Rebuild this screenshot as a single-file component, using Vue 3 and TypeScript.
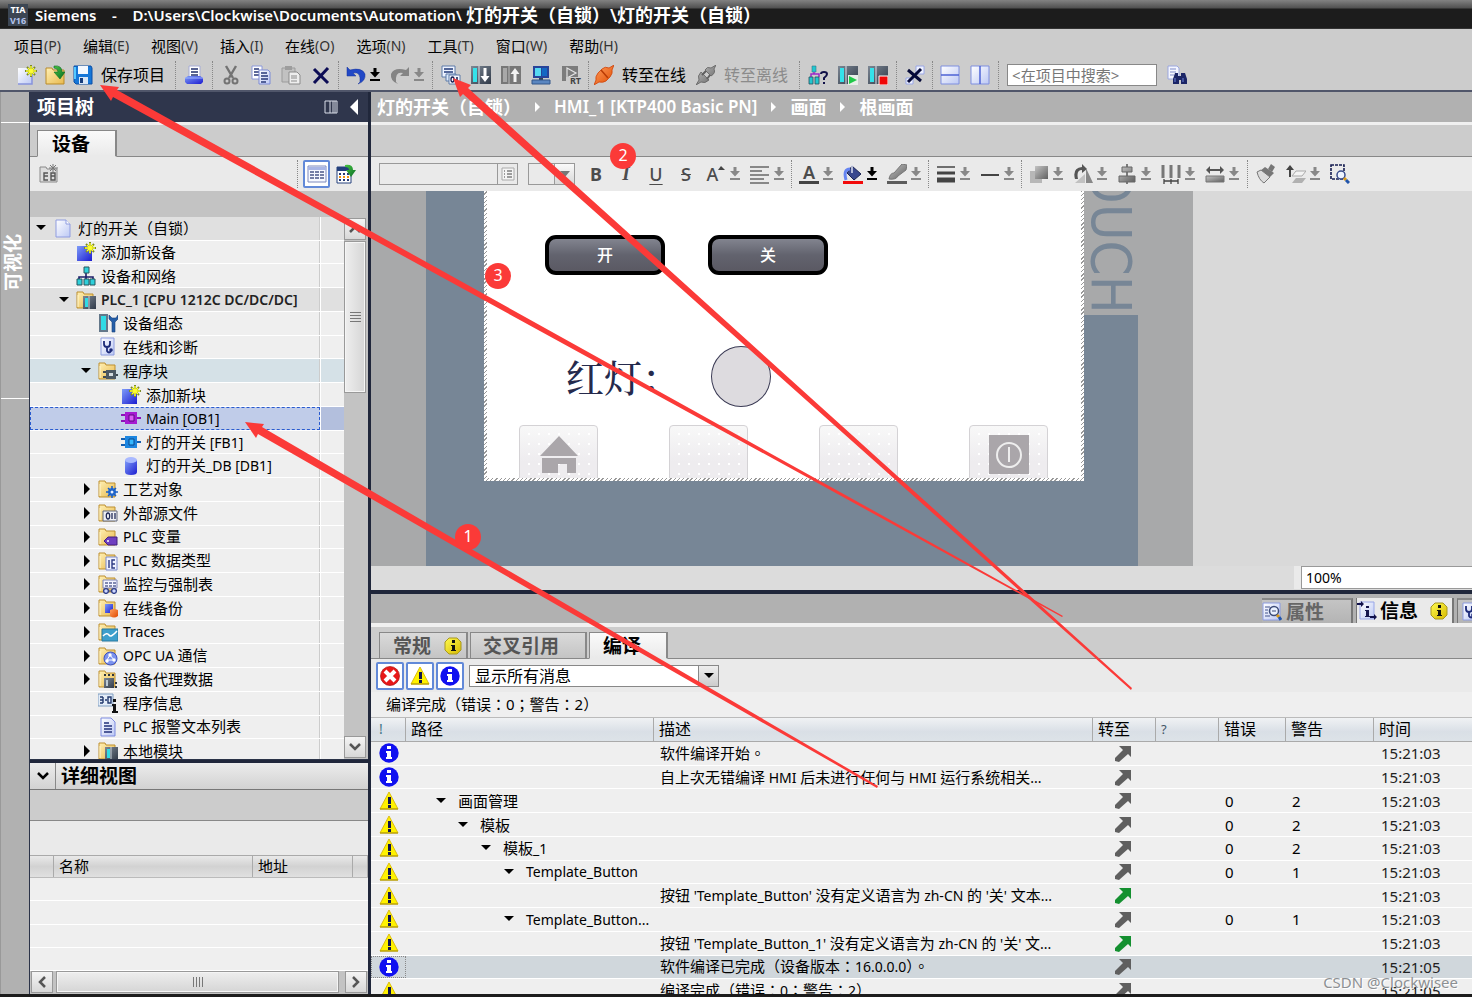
<script setup lang="ts">
import { ref } from 'vue'

interface MenuEntry { label: string; key: string }
interface TreeRow { level: number; icon: string; label: string; state?: 'open' | 'closed'; tone?: string }
interface Message { kind: 'info' | 'warn'; level?: number; path?: string; text?: string; green?: boolean; errors?: string; warnings?: string; time: string; tone?: string }
interface FormatTool { icon: string; title: string; drop?: boolean; strong?: boolean; glyph?: string }
interface Run { text: string; latin: boolean }

const menus: MenuEntry[] = [
  { label: '项目', key: '(P)' }, { label: '编辑', key: '(E)' }, { label: '视图', key: '(V)' },
  { label: '插入', key: '(I)' }, { label: '在线', key: '(O)' }, { label: '选项', key: '(N)' },
  { label: '工具', key: '(T)' }, { label: '窗口', key: '(W)' }, { label: '帮助', key: '(H)' },
]

const tree: TreeRow[] = [
  { level: 0, icon: 'page', label: '灯的开关（自锁）', state: 'open', tone: 'grey' },
  { level: 1, icon: 'add', label: '添加新设备' },
  { level: 1, icon: 'network', label: '设备和网络' },
  { level: 1, icon: 'f-plc', label: 'PLC_1 [CPU 1212C DC/DC/DC]', state: 'open', tone: 'grey plc' },
  { level: 2, icon: 'config', label: '设备组态' },
  { level: 2, icon: 'diag', label: '在线和诊断' },
  { level: 2, icon: 'f-block', label: '程序块', state: 'open', tone: 'blue' },
  { level: 3, icon: 'add', label: '添加新块' },
  { level: 3, icon: 'ob', label: 'Main [OB1]', tone: 'selected' },
  { level: 3, icon: 'fb', label: '灯的开关 [FB1]' },
  { level: 3, icon: 'db', label: '灯的开关_DB [DB1]' },
  { level: 2, icon: 'f-tech', label: '工艺对象', state: 'closed' },
  { level: 2, icon: 'f-src', label: '外部源文件', state: 'closed' },
  { level: 2, icon: 'f-tag', label: 'PLC 变量', state: 'closed' },
  { level: 2, icon: 'f-type', label: 'PLC 数据类型', state: 'closed' },
  { level: 2, icon: 'f-watch', label: '监控与强制表', state: 'closed' },
  { level: 2, icon: 'f-backup', label: '在线备份', state: 'closed' },
  { level: 2, icon: 'f-trace', label: 'Traces', state: 'closed' },
  { level: 2, icon: 'f-opc', label: 'OPC UA 通信', state: 'closed' },
  { level: 2, icon: 'f-proxy', label: '设备代理数据', state: 'closed' },
  { level: 2, icon: 'proginfo', label: '程序信息' },
  { level: 2, icon: 'textlist', label: 'PLC 报警文本列表' },
  { level: 2, icon: 'f-plc', label: '本地模块', state: 'closed' },
]

const messages: Message[] = [
  { kind: 'info', text: '软件编译开始。', time: '15:21:03' },
  { kind: 'info', text: '自上次无错编译 HMI 后未进行任何与 HMI 运行系统相关...', time: '15:21:03' },
  { kind: 'warn', level: 0, path: '画面管理', errors: '0', warnings: '2', time: '15:21:03' },
  { kind: 'warn', level: 1, path: '模板', errors: '0', warnings: '2', time: '15:21:03' },
  { kind: 'warn', level: 2, path: '模板_1', errors: '0', warnings: '2', time: '15:21:03' },
  { kind: 'warn', level: 3, path: 'Template_Button', errors: '0', warnings: '1', time: '15:21:03' },
  { kind: 'warn', text: "按钮 'Template_Button' 没有定义语言为 zh-CN 的 '关' 文本...", green: true, time: '15:21:03' },
  { kind: 'warn', level: 3, path: 'Template_Button...', errors: '0', warnings: '1', time: '15:21:03' },
  { kind: 'warn', text: "按钮 'Template_Button_1' 没有定义语言为 zh-CN 的 '关' 文...", green: true, time: '15:21:03' },
  { kind: 'info', text: '软件编译已完成（设备版本：16.0.0.0）。', time: '15:21:05', tone: 'current' },
  { kind: 'warn', text: '编译完成（错误：0；警告：2）', time: '15:21:05' },
]

const formatGroups: FormatTool[][] = [
  [{ icon: 'font-color', title: '字体颜色', drop: true, glyph: 'A' }, { icon: 'fill', title: '填充颜色', drop: true, strong: true }, { icon: 'pen', title: '线条颜色', drop: true }],
  [{ icon: 'widths', title: '线宽', drop: true }, { icon: 'dash', title: '线型', drop: true }],
  [{ icon: 'layer', title: '层', drop: true }, { icon: 'rotate', title: '旋转', drop: true }, { icon: 'center', title: '对齐', drop: true }, { icon: 'spread', title: '分布', drop: true }, { icon: 'samesize', title: '等宽', drop: true }],
  [{ icon: 'brush', title: '格式刷' }, { icon: 'order', title: '顺序', drop: true }, { icon: 'zoomsel', title: '缩放选区' }],
]

/** Splits a label into Latin and Chinese runs, which are set at different sizes. */
function runs(text: string): Run[] {
  return text.split(/([\x20-\x7e]+)/).filter(Boolean).map((t) => ({ text: t, latin: /^[\x20-\x7e]/.test(t) }))
}

const search = ref('')
const filter = ref('all')
const zoom = ref('100')
const fontName = ref('')
</script>

<template>
  <div class="app">
    <svg class="sprite" aria-hidden="true">
      <defs>
        <linearGradient id="gPage" x1="0" y1="0" x2="1" y2="1"><stop offset="0" stop-color="#fff" /><stop offset="1" stop-color="#bcc8f4" /></linearGradient>
        <linearGradient id="gFold" x1="0" y1="0" x2="1" y2="1"><stop offset="0" stop-color="#fff0b4" /><stop offset="1" stop-color="#e8b94e" /></linearGradient>
        <linearGradient id="gBlue" x1="0" y1="0" x2="1" y2="1"><stop offset="0" stop-color="#7e9cf8" /><stop offset="1" stop-color="#1c1cd0" /></linearGradient>
        <linearGradient id="gDark" x1="0" y1="0" x2="1" y2="1"><stop offset="0" stop-color="#7d8794" /><stop offset="1" stop-color="#303a48" /></linearGradient>
        <linearGradient id="gGrey" x1="0" y1="0" x2="1" y2="1"><stop offset="0" stop-color="#c4c4c4" /><stop offset="1" stop-color="#606060" /></linearGradient>
        <linearGradient id="gGreen" x1="0" y1="0" x2="1" y2="1"><stop offset="0" stop-color="#45c540" /><stop offset="1" stop-color="#0b6c27" /></linearGradient>
        <linearGradient id="gYel" x1="0" y1="0" x2="1" y2="1"><stop offset="0" stop-color="#fffb50" /><stop offset="1" stop-color="#d6b800" /></linearGradient>
        <linearGradient id="gOr" x1="0" y1="0" x2="1" y2="1"><stop offset="0" stop-color="#ffa060" /><stop offset="1" stop-color="#e04a00" /></linearGradient>
      </defs>
      <symbol id="star" viewBox="0 0 20 20"><path d="M14 0v12M8 6h12M10 2l8 8M18 2l-8 8" stroke="#7b8a28" stroke-width="2" /><path d="M14 1v10M9 6h10M11 3l6 6M17 3l-6 6" stroke="#ffff30" stroke-width="1.4" /></symbol>
      <symbol id="folder" viewBox="0 0 20 20"><path d="M1 2h6l1 2h9v14H1z" fill="url(#gFold)" stroke="#bd8f2e" /><path d="M2 17V5" stroke="#fff6cf" /></symbol>
      <symbol id="page" viewBox="0 0 20 20"><path d="M3 2h10l4 4v13H3z" fill="url(#gPage)" stroke="#8f9ce0" /><path d="M13 2v4h4" fill="#fff" stroke="#8f9ce0" /></symbol>
      <symbol id="new" viewBox="0 0 20 20"><path d="M1 3h14v16H1z" fill="url(#gPage)" /><path d="M15 8v11H1" fill="none" stroke="#8792dc" stroke-width="1.5" /><use href="#star" /></symbol>
      <symbol id="open" viewBox="0 0 20 20"><path d="M1 3h6l1 2h11v14H1z" fill="url(#gFold)" stroke="#b98b2b" /><path d="M9 1q8-1 8 6h3l-5 7-6-7h4q0-4-4-4z" fill="url(#gGreen)" stroke="#0e6b25" stroke-width=".6" /></symbol>
      <symbol id="save" viewBox="0 0 20 20"><path d="M1 1h17l1 2v16H3l-2-2z" fill="#1677d8" stroke="#0b4fa6" /><path d="M5 1h10v8H5z" fill="#f3f8ff" /><path d="M2 2v12" stroke="#54c8ff" stroke-width="2" /><path d="M6 12h9v7H6z" fill="#d9e7f7" /><path d="M7 13h3v5H7z" fill="#173d7b" /></symbol>
      <symbol id="print" viewBox="0 0 20 20"><path d="M5 1h11v11H5z" fill="#fff" stroke="#a6acd6" /><path d="M7 4h7M7 7h7M7 10h7" stroke="#22306e" stroke-width="1.4" /><path d="M1 13l3-2h12l3 2v4l-2 2H3l-2-2z" fill="url(#gBlue)" /><path d="M1 13h18" stroke="#9db4ff" /></symbol>
      <symbol id="cut" viewBox="0 0 20 20"><path d="M5 1l7 12M15 1L8 13" stroke="#737373" stroke-width="2.4" /><circle cx="6" cy="16" r="2.5" fill="none" stroke="#737373" stroke-width="2" /><circle cx="14" cy="16" r="2.5" fill="none" stroke="#737373" stroke-width="2" /></symbol>
      <symbol id="copy" viewBox="0 0 20 20"><path d="M1 1h10v13H1z" fill="#fff" stroke="#8b98da" /><path d="M3 4h5M3 7h5M3 10h5" stroke="#28387a" stroke-width="1.3" /><path d="M8 5h9l2 2v12H8z" fill="url(#gPage)" stroke="#7d8bd6" /><path d="M10 8h6M10 11h7M10 14h7M10 17h5" stroke="#28387a" stroke-width="1.3" /></symbol>
      <symbol id="paste" viewBox="0 0 20 20"><path d="M1 3h13v14H1z" fill="#c1c1c1" stroke="#9b9b9b" /><path d="M4 1h7v4H4z" fill="#9d9d9d" /><path d="M8 7h8l3 3v9H8z" fill="#eee" stroke="#8b8b8b" /><path d="M10 11h6M10 13h6M10 16h6" stroke="#8b8b8b" /></symbol>
      <symbol id="delete" viewBox="0 0 20 20"><path d="M3 4l14 14M17 3L3 18" stroke="#0c0c55" stroke-width="3" /></symbol>
      <symbol id="undo" viewBox="0 0 20 20"><path d="M1 2v9h9L7 8q8-2 7 9-1 1-2 2 8-3 7-10Q16 2 4 5z" fill="#2148c6" stroke="#17339b" stroke-width=".5" /></symbol>
      <symbol id="redo" viewBox="0 0 20 20"><path d="M19 2v9h-9l3-3Q5 6 6 17q1 1 2 2-8-3-7-10Q4 2 16 5z" fill="#848484" /></symbol>
      <symbol id="down" viewBox="0 0 10 14"><path d="M3.500 0h3v4H10L5 9.500 0 4h3.500zM0 11h10v2H0z" fill="currentColor" /></symbol>
      <symbol id="compile" viewBox="0 0 20 20"><path d="M1 1h13v11H1z" fill="#eef3ff" stroke="#5d7aa8" /><path d="M3 4h9M3 7h9" stroke="#203a78" stroke-width="1.5" /><path d="M5 9h10v7H5z" fill="#dce9fa" stroke="#5d7aa8" /><path d="M8 10h11v9H8z" fill="#f7f9ff" stroke="#5d7aa8" /><ellipse cx="11.500" cy="14.500" rx="1.500" ry="2.500" fill="none" stroke="#141c50" stroke-width="1.3" /><path d="M16 12v5" stroke="#141c50" stroke-width="1.5" /></symbol>
      <symbol id="download" viewBox="0 0 20 20"><path d="M0 1h20v18H0z" fill="url(#gDark)" /><path d="M2 3h4v14H2z" fill="#35e2ea" /><path d="M8 1v18" stroke="#dce4ee" /><path d="M12.500 3h3v8h3L14 17l-4.500-6h3z" fill="#fff" /></symbol>
      <symbol id="upload" viewBox="0 0 20 20"><path d="M0 1h20v18H0z" fill="#777" /><path d="M2 3h4v14H2z" fill="#a8a8a8" /><path d="M8 1v18" stroke="#bbb" /><path d="M12.500 17h3V9h3L14 3 9.500 9h3z" fill="#f2f2f2" /></symbol>
      <symbol id="sim" viewBox="0 0 20 20"><path d="M2 1h16v12H2z" fill="#28449a" /><path d="M4 3h6v8H4z" fill="#55d9f2" /><path d="M11 3h5v8h-5z" fill="#1468c4" /><path d="M8 13h4v2H8z" fill="#345" /><path d="M1 15h18v4H1z" fill="#5a86c0" stroke="#32568a" /></symbol>
      <symbol id="rt" viewBox="0 0 20 20"><path d="M1 1h16v15H1z" fill="#7c7c7c" /><path d="M6 3l9 5-9 5z" fill="#7c7c7c" stroke="#e4e4e4" stroke-width="1.2" /><path d="M5 12h15v8H5z" fill="#ccc" /></symbol>
      <symbol id="plug" viewBox="0 0 20 20"><path d="M20 0l-5 3q-4-2-7 1L4 8q-3 4-2 7l-2 5 5-3q4 1 7-1l4-4q3-4 2-7z" fill="url(#gOr)" stroke="#cf4106" stroke-width=".8" /><path d="M7 5l7 8" stroke="#b93a04" stroke-width="1.5" /></symbol>
      <symbol id="unplug" viewBox="0 0 20 20"><path d="M20 0l-5 3q-4-2-6 2l6 6q5-3 3-7zM0 20l3-5q-2-4 2-8l8 8q-4 4-8 2z" fill="url(#gGrey)" stroke="#5f5f5f" stroke-width=".8" /><path d="M6 10l4-4M11 14l3-4" stroke="#5f5f5f" stroke-width="2" /></symbol>
      <symbol id="nodes" viewBox="0 0 20 20"><path d="M4 1h4v6H4z" fill="#22c7cf" stroke="#30788b" stroke-width=".6" /><path d="M3 12V9h8v3M6 7v2" fill="none" stroke="#9a28c8" stroke-width="1.5" /><path d="M1 12h4v7H1zM7 12h4v7H7z" fill="#22c7cf" stroke="#27505e" stroke-width=".8" /><path d="M13 9q0-2 3-2t3 2-3 4v2M15 18h2" fill="none" stroke="#101048" stroke-width="2" /></symbol>
      <symbol id="start" viewBox="0 0 20 20"><path d="M0 1h20v18H0z" fill="url(#gDark)" /><path d="M2 3h4v14H2z" fill="#35e2ea" /><path d="M8 1v18" stroke="#dce4ee" /><path d="M10 10h10v10H10z" fill="#e8efe8" /><path d="M11 11l8 4-8 4z" fill="#20c848" /></symbol>
      <symbol id="stop" viewBox="0 0 20 20"><path d="M0 1h20v18H0z" fill="url(#gDark)" /><path d="M2 3h4v14H2z" fill="#35e2ea" /><path d="M8 1v18" stroke="#dce4ee" /><path d="M11 11h9v9h-9z" fill="#f00808" stroke="#fff" /></symbol>
      <symbol id="crossref" viewBox="0 0 20 20"><path d="M11 1h8v8h-8zM1 13h7v6H1z" fill="#edf1ff" stroke="#9aa7e6" /><path d="M3 5l13 11M16 4L3 17" stroke="#060a38" stroke-width="3" /></symbol>
      <symbol id="split-h" viewBox="0 0 20 20"><path d="M1 1h18v18H1z" fill="url(#gPage)" stroke="#7f8fe0" /><path d="M1 10h18" stroke="#4d62d4" stroke-width="1.500" /></symbol>
      <symbol id="split-v" viewBox="0 0 20 20"><path d="M1 1h18v18H1z" fill="url(#gPage)" stroke="#7f8fe0" /><path d="M10 1v18" stroke="#4d62d4" stroke-width="1.500" /></symbol>
      <symbol id="find" viewBox="0 0 20 20"><path d="M1 1h9l2 2v11H1z" fill="#f4f6ff" stroke="#9ba7e0" /><path d="M3 4h6M3 7h6M3 10h4" stroke="#7f8bc8" /><path d="M8 8h3v3h3V8h4l2 6v5h-6v-4h-2v4H6v-5z" fill="#1b2566" /><path d="M8 13v4M16 13v4" stroke="#6f83d8" /></symbol>
      <symbol id="panel" viewBox="0 0 14 14"><path d="M1 1h12v12H1zM6 1v12M9 1v12M11 1v12" fill="none" stroke="#d9dde8" /></symbol>
      <symbol id="newgrp" viewBox="0 0 20 20"><path d="M1 3h6l1 2h10v13H1z" fill="#ddd" stroke="#8a8a8a" /><path d="M9 9H5v7h4M5 12h4M12 9h4v7h-4zM12 12h4" fill="none" stroke="#555" stroke-width="1.4" /><path d="M14 0v9M10 4h9M11 1l6 6M17 1l-6 6" stroke="#777" /></symbol>
      <symbol id="table" viewBox="0 0 20 20"><path d="M1 2h18v16H1z" fill="#f7f9ff" stroke="#7c89bd" /><path d="M1 3h18v3H1z" fill="#a9b6e6" /><path d="M3 8h4M8 8h4M13 8h4M3 11h4M8 11h4M13 11h4M3 14h4M8 14h4M13 14h4" stroke="#4b5788" stroke-width="1.4" /></symbol>
      <symbol id="tabexp" viewBox="0 0 20 20"><path d="M1 3h14v16H1z" fill="#fff" stroke="#24407c" /><path d="M1 3h14v4H1z" fill="#24407c" /><path d="M3 10h2M7 10h2M11 10h2M3 16h2M7 16h2M11 16h2" stroke="#283c74" stroke-width="2" /><path d="M3 13h2M7 13h2M11 13h2" stroke="#f29412" stroke-width="2" /><path d="M9 1q8-1 8 5h3l-5 7-5-7h3q0-3-4-3z" fill="url(#gGreen)" /></symbol>
      <symbol id="add" viewBox="0 0 20 20"><path d="M1 4h15v15H1z" fill="url(#gBlue)" /><use href="#star" /></symbol>
      <symbol id="network" viewBox="0 0 20 20"><path d="M10 7v4M3 13v-2h14v2M10 11v2" fill="none" stroke="#1c1c6a" stroke-width="1.600" /><path d="M8 1h5v6H8zM1 13h5v6H1zM8 13h5v6H8zM14 13h5v6h-5z" fill="#2fd0da" stroke="#26575f" /></symbol>
      <symbol id="config" viewBox="0 0 20 20"><path d="M1 1h9v18H1z" fill="#64788a" /><path d="M3 3h5v14H3z" fill="#30dbe5" /><path d="M11 2v4l3 3v10h3V9l3-3V2l-2 3h-4z" fill="#255ea8" stroke="#1a3f7a" stroke-width=".6" /></symbol>
      <symbol id="diag" viewBox="0 0 20 20"><path d="M3 1h13v17H3z" fill="url(#gPage)" stroke="#8d9ce0" /><path d="M6 4v3q0 3 3 3t3-3V4M9 10v4q2 3 4 0" fill="none" stroke="#1c2a78" stroke-width="1.800" /><circle cx="13" cy="13" r="1.800" fill="#1c2a78" /></symbol>
      <symbol id="ob" viewBox="0 0 20 20"><path d="M0 7h5M0 13h5M15 10h5" stroke="#8d12b8" stroke-width="2" /><path d="M4 4h12v12H4z" fill="#a61ad2" /><path d="M8 7h5v6H8z" fill="#d95cf4" stroke="#5d0880" /></symbol>
      <symbol id="fb" viewBox="0 0 20 20"><path d="M0 7h5M0 13h5M15 10h5" stroke="#1560b2" stroke-width="2" /><path d="M4 4h12v12H4z" fill="#1c86e0" /><path d="M8 7h5v6H8z" fill="#35b8ff" stroke="#0a478c" /></symbol>
      <symbol id="db" viewBox="0 0 20 20"><path d="M4 4v12q0 3 6 3t6-3V4z" fill="url(#gBlue)" /><ellipse cx="10" cy="4" rx="6" ry="3" fill="#a9b9ff" /></symbol>
      <symbol id="f-plc" viewBox="0 0 20 20"><use href="#folder" /><path d="M7 6h13v13H7z" fill="url(#gDark)" /><path d="M9 8h3v9H9z" fill="#30dbe5" /><path d="M13 6v13" stroke="#c9d4dd" /></symbol>
      <symbol id="f-block" viewBox="0 0 20 20"><use href="#folder" /><path d="M5 11h4M5 16h4M17 14h3" stroke="#404a54" stroke-width="2" /><path d="M8 9h10v9H8z" fill="#4c5863" /><path d="M11 12h4v3h-4z" fill="#d5dce0" /></symbol>
      <symbol id="f-tech" viewBox="0 0 20 20"><use href="#folder" /><circle cx="14" cy="13" r="4" fill="#2c7be8" /><path d="M14 7v12M8 13h12M10 9l8 8M18 9l-8 8" stroke="#195cc2" stroke-width="1.500" /><circle cx="14" cy="13" r="1.500" fill="#e5f0ff" /></symbol>
      <symbol id="f-src" viewBox="0 0 20 20"><use href="#folder" /><path d="M5 8h14v10H5z" fill="#eef0f5" stroke="#60697c" /><ellipse cx="10" cy="13" rx="1.700" ry="3" fill="none" stroke="#222b58" stroke-width="1.300" /><path d="M14 10v6M17 10v6" stroke="#222b58" stroke-width="1.300" /></symbol>
      <symbol id="f-tag" viewBox="0 0 20 20"><use href="#folder" /><path d="M6 14l4-4h9v8h-9z" fill="#6f3fc0" stroke="#45217e" /><circle cx="10" cy="14" r="1" fill="#fff" /></symbol>
      <symbol id="f-type" viewBox="0 0 20 20"><use href="#folder" /><path d="M8 6h11v13H8z" fill="#f0f2ff" stroke="#7888cc" /><path d="M11 9v8M17 9h-3v8h3M14 13h3" fill="none" stroke="#2e3c84" stroke-width="1.400" /></symbol>
      <symbol id="f-watch" viewBox="0 0 20 20"><use href="#folder" /><path d="M5 6h14v8H5z" fill="#f3f4ff" stroke="#7d85b8" /><path d="M7 9h3M11 9h3M15 9h3M7 12h3M11 12h3M15 12h3" stroke="#5b6598" stroke-width="1.300" /><path d="M11 17h3" stroke="#2b3c8a" /><circle cx="8" cy="17" r="2.400" fill="#cfd8ff" stroke="#2b3c8a" stroke-width="1.300" /><circle cx="16" cy="17" r="2.400" fill="#cfd8ff" stroke="#2b3c8a" stroke-width="1.300" /></symbol>
      <symbol id="f-backup" viewBox="0 0 20 20"><use href="#folder" /><path d="M7 6h8v9H7z" fill="url(#gBlue)" /><path d="M12 12q4-2 8 0v6q-4 3-8 0z" fill="url(#gOr)" /></symbol>
      <symbol id="f-trace" viewBox="0 0 20 20"><use href="#folder" /><path d="M4 7h16v12H4z" fill="#3d9fcc" stroke="#2878a0" /><path d="M5 14q4-4 6-1t8-4" fill="none" stroke="#fff" stroke-width="1.500" /></symbol>
      <symbol id="f-opc" viewBox="0 0 20 20"><use href="#folder" /><circle cx="12.500" cy="12.500" r="6.500" fill="#7b92ee" stroke="#3a50c0" /><path d="M9 14l3-5 4 5z" fill="none" stroke="#fff" /><circle cx="12" cy="9" r="1.700" fill="#fff" /><circle cx="9" cy="15" r="1.700" fill="#fff" /><circle cx="16" cy="14" r="1.700" fill="#fff" /></symbol>
      <symbol id="f-proxy" viewBox="0 0 20 20"><use href="#folder" /><path d="M6 6h2M10 6h2M14 6h2" stroke="#2d3440" stroke-width="2" /><path d="M6 9h10v10H6z" fill="url(#gDark)" /><path d="M8 11h2v6H8z" fill="#bccad4" /><path d="M18 13v2M18 17v2" stroke="#2d3440" stroke-width="2" /></symbol>
      <symbol id="proginfo" viewBox="0 0 20 20"><path d="M0 1h15v12H0z" fill="#e4edf8" stroke="#7c9cc0" /><path d="M2 4h3M2 7h3M2 10h3M5 4v6M7 7h2M10 4h3v6h-3z" fill="none" stroke="#21386c" stroke-width="1.400" /><path d="M15 6h3v3h-3zM14 11h4v7h2v2h-6v-2h1v-5h-1z" fill="#111" /></symbol>
      <symbol id="textlist" viewBox="0 0 20 20"><path d="M3 1h10l4 4v14H3z" fill="url(#gPage)" stroke="#7d8be0" /><path d="M6 6h5M6 9h8M6 12h8M6 15h8" stroke="#22307a" stroke-width="1.600" /></symbol>
      <symbol id="align" viewBox="0 0 20 20"><path d="M0 3h19M0 7h12M0 11h19M0 15h14M0 19h19" stroke="#888" stroke-width="2.200" /></symbol>
      <symbol id="font-color" viewBox="0 0 20 20"><path d="M0 17h20v3H0z" fill="#444" /></symbol>
      <symbol id="fill" viewBox="0 0 20 20"><path d="M9 2l9 8-7 6-7-7z" fill="#39488e" stroke="#192352" /><path d="M9 1v8" stroke="#dce0f0" stroke-width="1.500" /><path d="M7 5Q0 5 3 16" fill="none" stroke="#6685f2" stroke-width="3" /><path d="M0 17h20v3H0z" fill="#f20b0b" /></symbol>
      <symbol id="pen" viewBox="0 0 20 20"><path d="M2 15q1-6 5-6l8-9 5 1-1 5-8 6q-2 4-9 3z" fill="url(#gGrey)" stroke="#777" /><path d="M0 17h20v3H0z" fill="#5c5c5c" /></symbol>
      <symbol id="widths" viewBox="0 0 20 20"><path d="M1 3h18" stroke="#444" stroke-width="1.500" /><path d="M1 9h18" stroke="#444" stroke-width="3" /><path d="M1 16h18" stroke="#444" stroke-width="5" /></symbol>
      <symbol id="dash" viewBox="0 0 20 20"><path d="M1 11h18" stroke="#444" stroke-width="2" /></symbol>
      <symbol id="layer" viewBox="0 0 20 20"><path d="M1 7h12v12H1z" fill="#b7b7b7" /><path d="M6 2h13v13H6z" fill="url(#gGrey)" /></symbol>
      <symbol id="rotate" viewBox="0 0 20 20"><path d="M2 15Q-1 4 9 3V0l5 5-5 4V6q-6 0-4 9z" fill="#555" /><path d="M13 4l7 15h-7z" fill="#888" /><path d="M12 10v9H2z" fill="#c1c1c1" /></symbol>
      <symbol id="center" viewBox="0 0 20 20"><path d="M10 0v20" stroke="#555" stroke-width="1.500" /><path d="M5 3h10v5H5zM2 12h16v6H2z" fill="url(#gGrey)" stroke="#666" /></symbol>
      <symbol id="spread" viewBox="0 0 20 20"><path d="M2 1v13M10 1v13M18 1v13" stroke="#777" stroke-width="3" /><path d="M3 17h14M3 15v5M10 15v5M17 15v5" stroke="#444" stroke-width="1.300" /></symbol>
      <symbol id="samesize" viewBox="0 0 20 20"><path d="M1 6l4-4v3h10V2l4 4-4 4V7H5v3z" fill="#555" /><path d="M1 12h18v6H1z" fill="url(#gGrey)" stroke="#777" /></symbol>
      <symbol id="brush" viewBox="0 0 20 20"><path d="M15 0l4 3-3 5-4-3z" fill="#777" /><path d="M9 3l9 6-5 5-9-7z" fill="#777" /><path d="M1 8l4-2 9 7-6 6Q3 16 1 8z" fill="#dcdcdc" stroke="#777" /></symbol>
      <symbol id="order" viewBox="0 0 20 20"><path d="M4 1l4 5H5v7H3V6H0z" fill="#444" /><path d="M10 7h10l-4 5H6z" fill="#f3f3f3" stroke="#aaa" /><path d="M10 14h10l-4 5H6z" fill="#b1b1b1" /></symbol>
      <symbol id="zoomsel" viewBox="0 0 20 20"><path d="M1 1h13v14H1z" fill="none" stroke="#141c50" stroke-width="1.600" stroke-dasharray="3 1" /><circle cx="11" cy="11" r="4" fill="#eef4ff" stroke="#394c8c" stroke-width="1.500" /><path d="M14 14l2 2" stroke="#d89a18" stroke-width="3" /><path d="M16 16l3 3" stroke="#2255aa" stroke-width="3" /></symbol>
      <symbol id="props" viewBox="0 0 20 20"><path d="M1 1h17v17H1z" fill="url(#gPage)" stroke="#8c9be0" /><path d="M3 5h5M3 8h3M3 11h3M3 14h5" stroke="#42528c" /><circle cx="12" cy="9" r="4.500" fill="#eaf1ff" stroke="#3d4c78" stroke-width="1.500" /><path d="M10 9h4" stroke="#3d4c78" /><path d="M15 13l2 2" stroke="#d89a18" stroke-width="3" /><path d="M17 15l2 3" stroke="#2255aa" stroke-width="3" /></symbol>
      <symbol id="infopage" viewBox="0 0 20 20"><path d="M3 1h14v17H3z" fill="url(#gPage)" stroke="#98a6e8" /><path d="M0 2h4V0l3 3-3 3V4H0zM13 15h4v-2l3 3-3 3v-2h-4z" fill="#10104a" /><path d="M9 5h3v2H9zM8 9h4v6h2v1H8v-1h1v-5H8z" fill="#15154e" /></symbol>
      <symbol id="yinfo" viewBox="0 0 18 18"><path d="M5 1h8l4 4v8l-4 4H5l-4-4V5z" fill="url(#gYel)" stroke="#a89820" /><path d="M8 3h3v3H8zM7 8h4v5h1v1H7v-1h1V9H7z" fill="#111" /></symbol>
      <symbol id="error" viewBox="0 0 20 20"><circle cx="10" cy="10" r="9.500" fill="#e81818" stroke="#a91212" stroke-width=".7" /><path d="M5 5l10 10M15 5L5 15" stroke="#fff" stroke-width="4" /></symbol>
      <symbol id="warn" viewBox="0 0 20 20"><path d="M10 1l9 17H1z" fill="#fff200" stroke="#dcbd12" /><path d="M1 18h18" stroke="#a99000" /><path d="M9 6h3v7H9zM9 14h3v3H9z" fill="#111550" /></symbol>
      <symbol id="info" viewBox="0 0 20 20"><circle cx="10" cy="10" r="9.700" fill="#1010f0" /><path d="M8 3h4v3H8zM7 8h5v6h1v2H7v-2h1v-4H7z" fill="#fff" /></symbol>
      <symbol id="goto" viewBox="0 0 16 17"><path d="M4 1h12v11l-3-3-9 8-4-1v-3l8-8z" fill="currentColor" /></symbol>
      <symbol id="tri-open" viewBox="0 0 12 12"><path d="M1 3h10L6 8z" fill="#000" /></symbol>
      <symbol id="tri-closed" viewBox="0 0 12 12"><path d="M4 0l6 6-6 6z" fill="#000" /></symbol>
      <symbol id="chev-down" viewBox="0 0 12 12"><path d="M1 3l5 5 5-5" fill="none" stroke="currentColor" stroke-width="2.500" /></symbol>
      <symbol id="chev-up" viewBox="0 0 12 12"><path d="M1 9l5-5 5 5" fill="none" stroke="currentColor" stroke-width="2.500" /></symbol>
      <symbol id="chev-left" viewBox="0 0 12 12"><path d="M9 1L4 6l5 5" fill="none" stroke="currentColor" stroke-width="2.500" /></symbol>
      <symbol id="chev-right" viewBox="0 0 12 12"><path d="M3 1l5 5-5 5" fill="none" stroke="currentColor" stroke-width="2.500" /></symbol>
    </svg>

    <header class="title">
      <span class="logo"><span>TIA</span><span class="ver">V16</span></span>
      <span class="latin">Siemens</span><span class="hyphen">-</span>
      <span class="latin path-text">D:\Users\Clockwise\Documents\Automation\</span><span>灯的开关（自锁）\灯的开关（自锁）</span>
    </header>

    <nav class="menu">
      <button v-for="m in menus" :key="m.key" type="button">{{ m.label }}<span>{{ m.key }}</span></button>
    </nav>

    <div class="toolbar">
      <div class="files">
        <button type="button" aria-label="新建项目"><svg class="ic"><use href="#new" /></svg></button>
        <button type="button" aria-label="打开项目"><svg class="ic"><use href="#open" /></svg></button>
        <button type="button" class="labelled"><svg class="ic"><use href="#save" /></svg>保存项目</button>
      </div>
      <i class="sep"></i>
      <button type="button" aria-label="打印"><svg class="ic"><use href="#print" /></svg></button>
      <i class="sep"></i>
      <button type="button" aria-label="剪切"><svg class="ic"><use href="#cut" /></svg></button>
      <button type="button" aria-label="复制"><svg class="ic"><use href="#copy" /></svg></button>
      <button type="button" aria-label="粘贴"><svg class="ic"><use href="#paste" /></svg></button>
      <button type="button" aria-label="删除"><svg class="ic"><use href="#delete" /></svg></button>
      <i class="sep tight"></i>
      <button type="button" class="combo strong" aria-label="撤消"><svg class="ic"><use href="#undo" /></svg><svg class="dn"><use href="#down" /></svg></button>
      <button type="button" class="combo" aria-label="重做"><svg class="ic"><use href="#redo" /></svg><svg class="dn"><use href="#down" /></svg></button>
      <i class="sep"></i>
      <button type="button" aria-label="编译"><svg class="ic"><use href="#compile" /></svg></button>
      <button type="button" aria-label="下载到设备"><svg class="ic"><use href="#download" /></svg></button>
      <button type="button" aria-label="从设备上传"><svg class="ic"><use href="#upload" /></svg></button>
      <button type="button" aria-label="启动仿真"><svg class="ic"><use href="#sim" /></svg></button>
      <button type="button" class="runtime" aria-label="启动运行系统"><svg class="ic"><use href="#rt" /></svg><span>RT</span></button>
      <i class="sep narrow"></i>
      <button type="button" class="labelled"><svg class="ic"><use href="#plug" /></svg>转至在线</button>
      <button type="button" class="labelled off"><svg class="ic"><use href="#unplug" /></svg>转至离线</button>
      <i class="sep wide"></i>
      <button type="button" aria-label="可访问的设备"><svg class="ic"><use href="#nodes" /></svg></button>
      <button type="button" aria-label="启动 CPU"><svg class="ic"><use href="#start" /></svg></button>
      <button type="button" aria-label="停止 CPU"><svg class="ic"><use href="#stop" /></svg></button>
      <i class="sep"></i>
      <button type="button" aria-label="交叉引用"><svg class="ic"><use href="#crossref" /></svg></button>
      <i class="sep tight"></i>
      <button type="button" aria-label="水平拆分"><svg class="ic"><use href="#split-h" /></svg></button>
      <button type="button" aria-label="垂直拆分"><svg class="ic"><use href="#split-v" /></svg></button>
      <i class="sep"></i>
      <input v-model="search" type="text" placeholder="<在项目中搜索>" aria-label="在项目中搜索" />
      <button type="button" aria-label="搜索"><svg class="ic"><use href="#find" /></svg></button>
    </div>

    <main class="work">
      <aside class="rail"><span>可视化</span></aside>

      <section class="side">
        <header class="side-head"><h2>项目树</h2><svg class="pn"><use href="#panel" /></svg><button type="button" aria-label="折叠"><svg width="10" height="16"><path d="M9 0v16L1 8z" fill="#fff" /></svg></button></header>
        <div class="tabs device"><button type="button" class="tab on">设备</button></div>
        <div class="side-tools">
          <button type="button" aria-label="新建组"><svg class="ic"><use href="#newgrp" /></svg></button>
          <i class="sep"></i>
          <button type="button" class="boxed" aria-label="显示列标题"><svg class="ic"><use href="#table" /></svg></button>
          <button type="button" aria-label="总览"><svg class="ic"><use href="#tabexp" /></svg></button>
        </div>
        <div class="band"></div>
        <div class="tree-wrap">
          <ul class="tree" role="tree">
            <li v-for="r in tree" :key="r.label" role="treeitem" :class="r.tone">
              <span class="node" :class="'lv' + r.level">
                <svg class="tri"><use v-if="r.state" :href="'#tri-' + r.state" /></svg>
                <svg class="ic"><use :href="'#' + r.icon" /></svg>
                <span class="txt"><span v-for="(p, k) in runs(r.label)" :key="k" :class="{ small: p.latin }">{{ p.text }}</span></span>
              </span>
              <span class="extra"></span>
            </li>
          </ul>
          <div class="vscroll">
            <button type="button" aria-label="向上滚动"><svg class="ch"><use href="#chev-up" /></svg></button>
            <div class="thumb"><i></i></div>
            <div class="track"></div>
            <button type="button" aria-label="向下滚动"><svg class="ch"><use href="#chev-down" /></svg></button>
          </div>
        </div>
        <div class="detail-head"><button type="button" aria-label="折叠详细视图"><svg class="ch"><use href="#chev-down" /></svg></button><h2>详细视图</h2></div>
        <div class="detail-strip"></div>
        <div class="detail-tools"></div>
        <table class="details">
          <thead><tr><th></th><th>名称</th><th>地址</th><th></th></tr></thead>
          <tbody><tr v-for="n in 4" :key="n"><td></td><td></td><td></td><td></td></tr></tbody>
        </table>
        <div class="hscroll">
          <button type="button" aria-label="向左滚动"><svg class="ch"><use href="#chev-left" /></svg></button>
          <div class="thumb"><i></i></div>
          <button type="button" aria-label="向右滚动"><svg class="ch"><use href="#chev-right" /></svg></button>
        </div>
      </section>

      <section class="editor">
        <nav class="crumbs">
          <a href="#">灯的开关（自锁）</a><svg class="cr"><path d="M0 0l5 5-5 5z" fill="#fff" /></svg>
          <a href="#" class="latin">HMI_1 [KTP400 Basic PN]</a><svg class="cr"><path d="M0 0l5 5-5 5z" fill="#fff" /></svg>
          <a href="#">画面</a><svg class="cr"><path d="M0 0l5 5-5 5z" fill="#fff" /></svg>
          <a href="#">根画面</a>
        </nav>
        <div class="edit-strip"></div>
        <div class="format">
          <div class="fontbox"><input v-model="fontName" type="text" aria-label="字体" /><button type="button" aria-label="字体列表"><svg width="14" height="14"><path d="M1 1h12v12H1z" fill="#f4f4f4" stroke="#aaa" /><path d="M3 4h1M6 4h5M3 7h1M6 7h5M3 10h1M6 10h5" stroke="#444" /></svg></button></div>
          <div class="sizebox"><select aria-label="字号"><option></option></select><span><svg width="12" height="8"><path d="M1 1h10L6 7z" fill="#777" /></svg></span></div>
          <div class="styles">
            <button type="button" class="letter bold" aria-label="粗体">B</button>
            <button type="button" class="letter italic" aria-label="斜体">I</button>
            <button type="button" class="letter under" aria-label="下划线">U</button>
            <button type="button" class="letter strike" aria-label="删除线">S</button>
            <button type="button" class="combo" aria-label="字体大小"><span class="letter grow">A<svg width="7" height="5"><path d="M0 4l3-4 4 4z" fill="#444" /></svg></span><svg class="dn"><use href="#down" /></svg></button>
            <button type="button" class="combo" aria-label="对齐方式"><svg class="ic"><use href="#align" /></svg><svg class="dn"><use href="#down" /></svg></button>
          </div>
          <template v-for="(g, i) in formatGroups" :key="i">
            <i class="sep" :class="{ tight: i < 3 }"></i>
            <button v-for="t in g" :key="t.icon" type="button" class="combo" :class="{ strong: t.strong }" :aria-label="t.title"><span v-if="t.glyph" class="letter color">{{ t.glyph }}</span><svg v-else class="ic"><use :href="'#' + t.icon" /></svg><svg v-if="t.drop" class="dn"><use href="#down" /></svg></button>
          </template>
        </div>

        <div class="canvas">
          <div class="bezel left"></div>
          <div class="device-body">
            <div class="screen">
              <div class="hmi">
                <button type="button" class="hmi-btn b-on">开</button>
                <button type="button" class="hmi-btn b-off">关</button>
                <span class="lamp-label">红灯：</span>
                <span class="lamp"></span>
                <div class="fkey k1"><svg width="40" height="40"><path d="M20 1l19 20H1zM3 23h34v15h-9V29h-9v9H3z" fill="#aaa6aa" /></svg></div>
                <div class="fkey k2"></div>
                <div class="fkey k3"></div>
                <div class="fkey k4"><svg width="40" height="40"><path d="M0 0h40v39H0z" fill="#aaa6aa" /><circle cx="20" cy="20" r="12" fill="none" stroke="#eee" stroke-width="2" /><path d="M20 12v15" stroke="#eee" stroke-width="2" /></svg></div>
              </div>
            </div>
            <div class="brand"><span>OUCH</span></div>
          </div>
          <div class="bezel right"></div>
        </div>
        <div class="zoom-row"><select v-model="zoom" aria-label="缩放"><option value="100">100%</option></select></div>

        <div class="inspector-tabs">
          <button type="button" class="itab"><svg class="ic"><use href="#props" /></svg>属性</button>
          <button type="button" class="itab on"><svg class="ic"><use href="#infopage" /></svg>信息<svg class="yi"><use href="#yinfo" /></svg></button>
          <button type="button" class="itab cut" aria-label="诊断"><svg class="ic"><use href="#diag" /></svg></button>
        </div>
        <div class="tabs sub">
          <button type="button" class="tab general">常规<svg class="yi"><use href="#yinfo" /></svg></button>
          <button type="button" class="tab refs">交叉引用</button>
          <button type="button" class="tab on">编译</button>
        </div>
        <div class="filters">
          <button type="button" class="boxed" aria-label="错误"><svg class="ic"><use href="#error" /></svg></button>
          <button type="button" class="boxed" aria-label="警告"><svg class="ic"><use href="#warn" /></svg></button>
          <button type="button" class="boxed" aria-label="信息"><svg class="ic"><use href="#info" /></svg></button>
          <div class="pick"><select v-model="filter" aria-label="消息筛选"><option value="all">显示所有消息</option></select><span><svg width="10" height="6"><path d="M0 0h10L5 5z" /></svg></span></div>
        </div>
        <p class="status">编译完成（错误：0；警告：2）</p>
        <table class="messages">
          <thead><tr><th class="mark">!</th><th>路径</th><th>描述</th><th>转至</th><th class="q">?</th><th>错误</th><th>警告</th><th>时间</th></tr></thead>
          <tbody>
            <tr v-for="(m, i) in messages" :key="i" :class="m.tone">
              <td class="kind"><svg class="ic"><use :href="'#' + m.kind" /></svg></td>
              <td><span v-if="m.path" class="path" :class="'p' + m.level"><svg class="tri"><use href="#tri-open" /></svg><span class="txt"><span v-for="(p, k) in runs(m.path)" :key="k" :class="{ small: p.latin }">{{ p.text }}</span></span></span></td>
              <td><span v-if="m.text" class="txt"><span v-for="(p, k) in runs(m.text)" :key="k" :class="{ small: p.latin }">{{ p.text }}</span></span></td>
              <td class="go"><svg class="gt" :class="{ green: m.green }"><use href="#goto" /></svg></td>
              <td></td>
              <td>{{ m.errors }}</td>
              <td>{{ m.warnings }}</td>
              <td class="time">{{ m.time }}</td>
            </tr>
          </tbody>
        </table>
      </section>
    </main>
    <div class="foot"></div>

    <svg class="marks" aria-hidden="true">
      <g fill="#fb3a38">
        <path d="M245 422L264 424L262 427L878 786L877 788L258 434L256 438z" />
        <path d="M100 85L119 87L117 90L1063 616L1062 617L113 97L111 101z" />
        <path d="M453 78L471 85L468 88L1132 688L1131 690L463 94L460 97z" />
      </g>
    </svg>
    <span class="badge n1">1</span>
    <span class="badge n2">2</span>
    <span class="badge n3">3</span>
    <span class="watermark">CSDN @Clockwisee</span>
  </div>
</template>

<style>
html, body { margin: 0; }
</style>

<style scoped>
* { box-sizing: border-box; }
.app { position: relative; display: flex; flex-direction: column; height: 100vh; overflow: hidden; background: #ccc; color: #000; font: 15px/20px "Noto Sans", "Noto Sans CJK SC", sans-serif; white-space: nowrap; }
.sprite { position: absolute; width: 0; height: 0; }
button { display: flex; align-items: center; flex: none; padding: 0; border: 0; background: none; color: inherit; font: inherit; }
input, select { font: inherit; border-radius: 0; appearance: none; outline: 0; }
h2 { margin: 0; font-size: 19px; line-height: 24px; font-weight: 700; }
svg { display: block; flex: none; }
.ic { width: 20px; height: 20px; }
.tri, .ch { width: 12px; height: 12px; }
.dn { width: 10px; height: 14px; color: #888; }
.strong .dn { color: #000; }
.yi { width: 18px; height: 18px; }
.small { font-size: 14px; }
.txt { white-space: pre; }

.title { flex: none; display: flex; align-items: center; height: 29px; padding-left: 8px; background: linear-gradient(#828282, #505050 8px, #1c1c1c 9px, #1c1c1c 28px, #333 28px); color: #fff; font-size: 18px; font-weight: 600; }
.title .latin { font-size: 15px; }
.path-text { margin-right: 4px; }
.logo { display: flex; flex-direction: column; width: 20px; height: 22px; margin-right: 7px; background: #3c4653; font-size: 9px; line-height: 11px; font-weight: 700; text-align: center; }
.logo .ver { color: #b4c4ee; }
.hyphen { width: 36px; text-align: center; font-size: 15px; }

.menu { flex: none; display: flex; gap: 22px; height: 31px; padding: 3px 0 0 14px; }
.menu span { font-size: 14px; color: #333; }
.toolbar { flex: none; display: flex; align-items: center; gap: 10px; height: 32px; padding-left: 17px; border-bottom: 2px solid #50566a; font-size: 16px; }
.files { display: flex; gap: 8px; margin-right: 2px; }
.labelled { gap: 8px; }
.labelled.off { color: #8b8b8b; }
.sep { flex: none; width: 1px; height: 28px; margin: 0 -2px; border-left: 1px dotted #888; }
.sep.tight { margin: 0 -3px; }
.sep.narrow { margin: 0 -5px 0 -3px; }
.sep.wide { margin: 0 -2px 0 1px; }
.combo { gap: 4px; }
.runtime { position: relative; }
.runtime span { position: absolute; right: 0; bottom: -1px; font-size: 9px; line-height: 10px; font-weight: 700; color: #444; }
.toolbar input { width: 150px; height: 22px; padding: 0 4px; border: 1px solid #888; background: #fff; font-size: 15px; }
.toolbar input::placeholder { color: #777; opacity: 1; }

.work { flex: 1; min-height: 0; display: grid; grid-template-columns: 30px 338px minmax(0, 1fr); }
.rail { display: flex; justify-content: center; padding-top: 141px; padding-right: 4px; border-right: 1px solid #2b3348; border-left: 1px solid #999; background: linear-gradient(#fff, #fff) 0 30px / 100% 1px no-repeat, linear-gradient(#fff, #fff) 0 306px / 100% 1px no-repeat, #b1b1b1; color: #fff; font-size: 19px; font-weight: 700; }
.rail span { writing-mode: vertical-rl; text-orientation: sideways; transform: rotate(180deg); height: 58px; line-height: 24px; }
.side { display: flex; flex-direction: column; min-height: 0; min-width: 0; background: #efefef; }
.side-head { flex: none; display: flex; align-items: center; height: 30px; padding: 0 9px 0 7px; background: #2f364c; color: #fff; }
.side-head h2 { flex: 1; }
.pn { width: 14px; height: 14px; margin-right: 11px; }
.tabs { flex: none; display: flex; align-items: flex-end; border-bottom: 1px solid #888; border-top: 3px solid #f0f0f0; background: #ccc; }
.tabs.device { height: 35px; padding-left: 7px; }
.tab { height: 27px; margin-bottom: -1px; border: 1px solid #888; border-right-width: 2px; background: linear-gradient(#dadada, #c4c4c4); color: #555; font-size: 19px; font-weight: 700; }
.tab.on { padding: 0 25px 0 14px; border-bottom-color: #eaeaea; background: linear-gradient(#fafafa, #eaeaea); color: #000; }
.side-tools { flex: none; display: flex; align-items: center; gap: 6px; height: 34px; padding: 0 12px 0 9px; background: #eaeaea; }
.side-tools .sep { margin: 0 -1px 0 auto; }
.boxed { justify-content: center; width: 28px; height: 28px; border: 2px solid #6289d8; border-radius: 2px; background: #fff; }
.side-tools .boxed { width: 27px; }
.band { flex: none; height: 26px; background: #c3c3c3; }
.tree-wrap { flex: 1; min-height: 0; display: flex; overflow: hidden; border-bottom: 1px solid #2b3348; }
.tree { flex: 1; display: grid; grid-template-rows: repeat(23, 1fr); height: 546px; margin: 0; padding: 0; list-style: none; }
.tree li { display: grid; grid-template-columns: minmax(0, 1fr) 24px; min-height: 0; border-bottom: 1px solid #fff; }
.node { display: flex; align-items: center; border-right: 1px solid #ccc; }
.node .tri { margin-right: 6px; }
.node .ic { margin-right: 5px; }
.lv0 { padding-left: 5px; }
.lv1 { padding-left: 28px; }
.lv2 { padding-left: 50px; }
.lv3 { padding-left: 73px; }
.extra { border-left: 1px solid #fff; }
.grey { background: #e0e0e0; }
.plc { font-weight: 600; }
.plc .small { color: #222; }
.blue { background: #d5e1e7; }
.selected { background: #b3bfdd; }
.selected .node { border: 1px dashed #2a5bd0; background: #c0cce9; }
.selected .lv3 { padding-left: 72px; }
.vscroll { flex: none; display: flex; flex-direction: column; width: 24px; padding: 1px 1px 1px 0; background: #c3c3c3; }
.vscroll button, .hscroll button { justify-content: center; width: 22px; height: 22px; border: 1px solid #999; background: linear-gradient(#f4f4f4, #d8d8d8); color: #555; }
.thumb { display: flex; align-items: center; justify-content: center; border: 1px solid #999; outline: 1px solid #f5f5f5; outline-offset: -2px; }
.vscroll .thumb { width: 22px; height: 152px; margin-top: 1px; background: linear-gradient(90deg, #eee, #d5d5d5); }
.vscroll .thumb i { width: 11px; height: 10px; background: repeating-linear-gradient(#777 0 1px, transparent 1px 3px); }
.track { flex: 1; }
.detail-head { flex: none; display: flex; align-items: center; height: 30px; border-top: 3px solid #20273b; border-bottom: 1px solid #777; background: linear-gradient(#ececec, #d2d2d2); }
.detail-head button { width: 26px; height: 26px; justify-content: center; border-right: 1px solid #888; }
.detail-head h2 { padding-left: 5px; }
.detail-strip { flex: none; height: 31px; border-bottom: 1px solid #888; background: #ccc; }
.detail-tools { flex: none; height: 34px; background: #eaeaea; }
.details, .details thead, .details tbody { display: block; flex: none; }
.details tbody { display: grid; grid-template-rows: repeat(4, 1fr); height: 93px; }
.details tr { display: grid; grid-template-columns: 24px minmax(0, 1fr) 100px 15px; }
.details thead tr { height: 23px; border-top: 1px solid #aaa; border-bottom: 1px solid #bbb; background: linear-gradient(#e9e9e9, #d2d2d2 50%, #e0e0e0); }
.details tbody tr { border-bottom: 1px solid #fff; }
.details th { padding: 0 0 0 5px; border-right: 1px solid #aaa; text-align: left; font-weight: 400; line-height: 20px; }
.hscroll { flex: none; display: flex; justify-content: space-between; gap: 3px; height: 23px; padding: 0 1px; background: #c3c3c3; }
.hscroll .thumb { flex: 1; height: 22px; margin-right: 3px; background: linear-gradient(#eee, #d5d5d5); }
.hscroll .thumb i { width: 10px; height: 10px; background: repeating-linear-gradient(90deg, #777 0 1px, transparent 1px 3px); }

.editor { display: flex; flex-direction: column; min-width: 0; min-height: 0; border-left: 3px solid #20273b; background: #efefef; }
.crumbs { flex: none; display: flex; align-items: center; height: 30px; padding-left: 6px; background: #b1b1b1; font-size: 18px; font-weight: 700; }
.crumbs a { color: #fff; text-decoration: none; }
.crumbs .latin { font-size: 17px; font-weight: 600; }
.cr { width: 5px; height: 10px; margin: 0 14px; }
.edit-strip { flex: none; height: 35px; border-top: 3px solid #f0f0f0; border-bottom: 1px solid #888; background: #ccc; }
.format { flex: none; display: flex; align-items: center; gap: 10px; height: 34px; padding-left: 8px; background: #eaeaea; }
.fontbox, .sizebox { flex: none; display: flex; width: 139px; height: 22px; border: 1px solid #999; }
.fontbox input { flex: 1; min-width: 0; padding: 0 4px; border: 0; background: #eaeaea; }
.fontbox button { width: 20px; justify-content: center; border-left: 1px solid #999; }
.sizebox { width: 47px; }
.sizebox select { flex: 1; min-width: 0; border: 0; background: #eaeaea; }
.sizebox span { display: flex; align-items: center; justify-content: center; width: 20px; border-left: 1px solid #999; background: linear-gradient(#fafafa, #d8d8d8); }
.styles { flex: none; display: flex; align-items: center; gap: 10px; margin-left: 1px; }
.letter { display: flex; justify-content: center; width: 20px; color: #4c4c4c; font-size: 18px; line-height: 20px; font-weight: 500; }
.letter.bold { font-weight: 700; }
.letter.italic { font-family: "Liberation Serif", serif; font-style: italic; font-weight: 700; font-size: 19px; }
.letter.under { text-decoration: underline; text-underline-offset: 3px; }
.letter.strike { text-decoration: line-through; }
.letter.grow { align-items: flex-start; }
.letter.grow svg { margin-top: 2px; }
.letter.color { height: 20px; border-bottom: 3px solid #444; line-height: 16px; font-weight: 600; }

.canvas { flex: none; display: flex; height: 375px; overflow: hidden; background: #d9d9d9; }
.bezel { flex: none; width: 55px; background: #a8a9aa; }
.device-body { flex: none; display: flex; align-items: flex-start; width: 712px; padding-left: 58px; background: #778696; }
.screen { flex: none; width: 600px; height: 290px; padding: 0 3px 3px; background: repeating-linear-gradient(135deg, #fff 0 2px, #999 2px 3px); }
.hmi { position: relative; height: 287px; overflow: hidden; background: #fff; }
.hmi-btn { position: absolute; top: 44px; justify-content: center; width: 120px; height: 40px; border: 4px solid #000; border-radius: 11px; background: linear-gradient(#82848f, #62636e 50%, #5a5963); color: #fff; font-size: 16px; font-weight: 500; }
.b-on { left: 58px; }
.b-off { left: 221px; }
.lamp-label { position: absolute; left: 79px; top: 159px; font: 500 38px/52px "Noto Serif CJK SC", "Noto Sans CJK SC", serif; color: #252a4c; }
.lamp { position: absolute; left: 224px; top: 155px; width: 60px; height: 61px; border: 1px solid #3b3b55; border-radius: 50%; background: #dddbdf; }
.fkey { position: absolute; top: 234px; display: flex; justify-content: center; width: 79px; height: 62px; padding-top: 9px; border: 1px solid #d4d2d5; border-radius: 4px; background: radial-gradient(#fff 1px, transparent 1px) 4px 3px / 10px 10px, linear-gradient(#f8f8f8, #eeecef 60%); }
.k1 { left: 32px; }
.k2 { left: 182px; }
.k3 { left: 332px; }
.k4 { left: 482px; }
.brand { flex: none; display: flex; align-items: flex-end; width: 54px; height: 124px; padding-bottom: 1px; overflow: hidden; background: #a8a9aa; }
.brand span { writing-mode: vertical-rl; font: 56px/54px "DejaVu Sans Condensed", "Liberation Sans Narrow", "Liberation Sans", sans-serif; color: #778696; }
.zoom-row { flex: none; display: flex; justify-content: flex-end; height: 24px; background: #dcdcdc; }
.zoom-row select { width: 171px; height: 23px; padding: 0 4px; border: 1px solid #999; border-right: 0; background: #fff; box-shadow: -7px 0 #eaeaea; font-size: 14px; }

.inspector-tabs { flex: none; display: flex; align-items: flex-end; justify-content: flex-end; gap: 3px; height: 33px; border-top: 4px solid #20273b; background: #b1b1b1; font-size: 19px; font-weight: 700; overflow: hidden; }
.itab { width: 91px; height: 25px; gap: 4px; border-top: 2px solid #888; border-right: 2px solid #777; background: linear-gradient(#c4c4c4, #b4b4b4); color: #666; }
.itab.on { width: 98px; gap: 3px; border-top: 0; border-left: 1px solid #777; background: #eaeaea; color: #000; }
.itab.on .yi { margin-left: auto; margin-right: 4px; }
.itab.cut { width: 15px; padding-left: 2px; border-right: 0; border-left: 1px solid #777; }
.tabs.sub { height: 36px; padding-left: 8px; gap: 2px; border-top-width: 4px; }
.tab.general { gap: 13px; padding: 0 4px 0 13px; }
.tab.refs { padding: 0 26px 0 12px; }
.tabs.sub .tab.on { padding: 0 25px 0 13px; }
.filters { flex: none; display: flex; align-items: center; gap: 2px; height: 33px; padding-left: 5px; background: #eaeaea; }
.pick { display: flex; width: 250px; height: 22px; margin-left: 3px; border: 1px solid #888; }
.pick select { flex: 1; min-width: 0; padding: 0 5px; border: 0; background: #fff; font-size: 16px; }
.pick span { display: flex; align-items: center; justify-content: center; width: 20px; border-left: 1px solid #888; background: linear-gradient(#eee, #ccc); }
.status { flex: none; height: 25px; margin: 0; padding-left: 15px; line-height: 25px; }
.status, .messages td { font-family: "Noto Sans", "Noto Sans CJK TC", sans-serif; }
.messages { display: block; flex: 1; min-height: 0; overflow: hidden; }
.messages thead { display: block; }
.messages tbody { display: grid; grid-template-rows: repeat(11, 1fr); height: 261px; }
.messages tr { display: grid; grid-template-columns: 35px 248px minmax(0, 1fr) 63px 63px 67px 88px 98px; min-height: 0; }
.messages thead tr { height: 25px; border-top: 1px solid #bbb; border-bottom: 1px solid #aaa; background: linear-gradient(#f0f2f4, #d9dfe6 60%, #dde3e8); }
.messages th { padding: 0 0 0 5px; border-right: 1px solid #aaa; text-align: left; font-weight: 400; font-size: 16px; line-height: 22px; }
.messages th:last-child { border-right: 0; }
.messages th.mark { padding-left: 8px; font-size: 14px; color: #478; }
.messages th.q { font-size: 13px; color: #456; }
.messages tbody tr { border-bottom: 1px solid #fff; }
.messages td { display: flex; align-items: center; min-width: 0; padding: 0 0 0 6px; overflow: hidden; }
.messages td.kind { padding-left: 8px; }
.messages td.go { padding-left: 22px; }
.messages td.time { padding-left: 7px; color: #222; }
.current { background: #d0d7dc; }
.current .kind { outline: 1px dotted #888; outline-offset: -1px; }
.gt { width: 16px; height: 17px; color: #5f5f5f; }
.gt.green { color: #149030; }
.path { display: flex; align-items: center; gap: 11px; }
.p0 { padding-left: 23px; }
.p1 { padding-left: 45px; }
.p2 { padding-left: 68px; }
.p3 { padding-left: 91px; }
.foot { flex: none; height: 3px; background: #1c1c1c; }

.marks { position: absolute; left: 0; top: 0; width: 1472px; height: 997px; pointer-events: none; }
.badge { position: absolute; width: 26px; height: 26px; border-radius: 50%; background: #fb3a38; color: #fff; font-size: 16px; line-height: 24px; text-align: center; }
.n1 { left: 455px; top: 524px; }
.n2 { left: 610px; top: 143px; }
.n3 { left: 485px; top: 263px; }
.watermark { position: absolute; right: 14px; bottom: 5px; font: 15px/20px "Noto Sans", sans-serif; color: #8d9093; text-shadow: 1px 1px #fff; }
</style>
